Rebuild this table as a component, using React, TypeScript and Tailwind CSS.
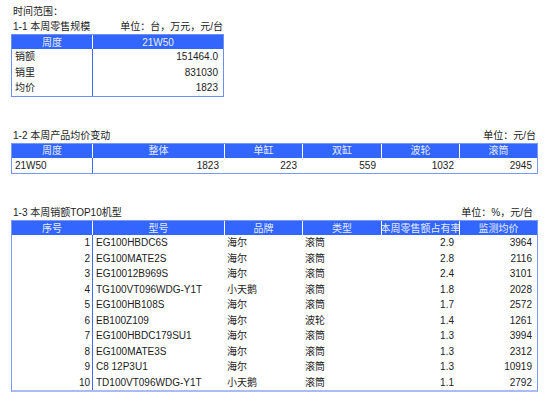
import React from "react";

const HB = "bg-[#3366ff]";
const HT = "text-[#e4ebff]";

function HeadCell({ children, first }: { children: React.ReactNode; first?: boolean }) {
  return (
    <div
      className={`flex items-center justify-center overflow-hidden whitespace-nowrap h-[14px] ${HT} ${
        first ? "" : "border-l border-white"
      }`}
    >
      {children}
    </div>
  );
}

function Cell({
  children,
  align,
  divider,
  pr,
}: {
  children: React.ReactNode;
  align: "l" | "r";
  divider?: boolean;
  pr?: string;
}) {
  return (
    <div
      className={`flex items-center h-[15.5px] whitespace-pre overflow-hidden ${
        align === "l" ? "justify-start pl-[3px]" : `justify-end ${pr ?? "pr-[5px]"}`
      } ${divider ? "border-l border-[#3f6cf2]" : ""}`}
    >
      {children}
    </div>
  );
}

const rows3 = [
  ["1", "EG100HBDC6S", "海尔", "滚筒", "2.9", "3964"],
  ["2", "EG100MATE2S", "海尔", "滚筒", "2.8", "2116"],
  ["3", "EG10012B969S", "海尔", "滚筒", "2.4", "3101"],
  ["4", "TG100VT096WDG-Y1T", "小天鹅", "滚筒", "1.8", "2028"],
  ["5", "EG100HB108S", "海尔", "滚筒", "1.7", "2572"],
  ["6", "EB100Z109", "海尔", "波轮", "1.4", "1261"],
  ["7", "EG100HBDC179SU1", "海尔", "滚筒", "1.3", "3994"],
  ["8", "EG100MATE3S", "海尔", "滚筒", "1.3", "2312"],
  ["9", "C8 12P3U1", "海尔", "滚筒", "1.3", "10919"],
  ["10", "TD100VT096WDG-Y1T", "小天鹅", "滚筒", "1.1", "2792"],
];

const COLS6 = "grid grid-cols-[80px_132px_78px_79px_78px_78px]";

export default function App() {
  return (
    <div className="w-[550px] h-[402px] bg-white text-[10px] text-[#1c1c1c] font-['Liberation_Sans','Noto_Sans_CJK_SC',sans-serif] pt-[4px] pl-[11px] overflow-hidden">
      <div className="h-[15px] flex items-center pl-[2px]">时间范围：</div>
      <div className="w-[213px] h-[15px] flex items-center justify-between pl-[2px] pr-[1px]">
        <span>1-1 本周零售规模</span>
        <span>单位：台，万元，元/台</span>
      </div>
      <div className="w-[213px] border border-[#6f8ef3]">
        <div className={`grid grid-cols-[80px_131px] ${HB}`}>
          <HeadCell first>周度</HeadCell>
          <HeadCell>21W50</HeadCell>
        </div>
        {[
          ["销额", "151464.0"],
          ["销里", "831030"],
          ["均价", "1823"],
        ].map(([a, b]) => (
          <div key={a} className="grid grid-cols-[80px_131px]">
            <Cell align="l">{a}</Cell>
            <Cell align="r" divider>
              {b}
            </Cell>
          </div>
        ))}
      </div>

      <div className="mt-[31px] w-[527px] h-[15px] flex items-center justify-between pl-[2px] pr-[2px]">
        <span>1-2 本周产品均价变动</span>
        <span>单位：元/台</span>
      </div>
      <div className="w-[527px] border border-[#7b98f4]">
        <div className={`${COLS6} ${HB}`}>
          <HeadCell first>周度</HeadCell>
          <HeadCell>整体</HeadCell>
          <HeadCell>单缸</HeadCell>
          <HeadCell>双缸</HeadCell>
          <HeadCell>波轮</HeadCell>
          <HeadCell>滚筒</HeadCell>
        </div>
        <div className={COLS6}>
          <Cell align="l">21W50</Cell>
          <Cell align="r" divider>
            1823
          </Cell>
          <Cell align="r">223</Cell>
          <Cell align="r">559</Cell>
          <Cell align="r">1032</Cell>
          <Cell align="r">2945</Cell>
        </div>
      </div>

      <div className="mt-[31px] w-[527px] h-[15px] flex items-center justify-between pl-[2px] pr-[5px]">
        <span>1-3 本周销额TOP10机型</span>
        <span>单位：%，元/台</span>
      </div>
      <div className="w-[527px] border border-[#7b98f4] border-b-2 border-b-[#a9bbf8]">
        <div className={`${COLS6} ${HB}`}>
          <HeadCell first>序号</HeadCell>
          <HeadCell>型号</HeadCell>
          <HeadCell>品牌</HeadCell>
          <HeadCell>类型</HeadCell>
          <HeadCell>本周零售额占有率</HeadCell>
          <HeadCell>监测均价</HeadCell>
        </div>
        {rows3.map((r) => (
          <div key={r[0]} className={COLS6}>
            <Cell align="r" pr="pr-[2px]">
              {r[0]}
            </Cell>
            <Cell align="l" divider>
              {r[1]}
            </Cell>
            <Cell align="l">{r[2]}</Cell>
            <Cell align="l">{r[3]}</Cell>
            <Cell align="r">{r[4]}</Cell>
            <Cell align="r">{r[5]}</Cell>
          </div>
        ))}
      </div>
    </div>
  );
}
